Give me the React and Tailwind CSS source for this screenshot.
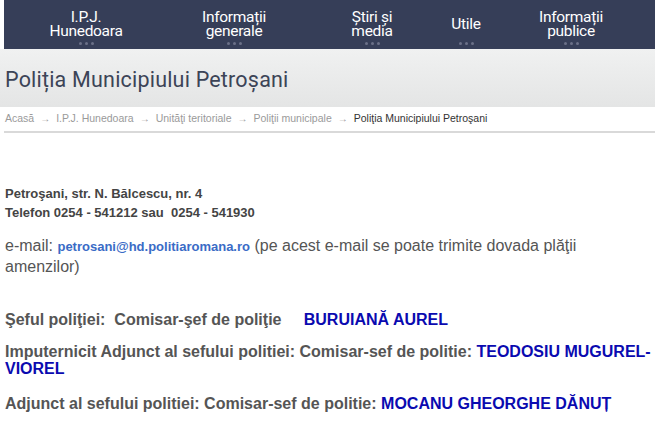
import React from 'react';

const NAV = [
    { lines: ['I.P.J.', 'Hunedoara'], w: 'w-[164px]' },
    { lines: ['Informații', 'generale'], w: 'w-[132px]' },
    { lines: ['Știri și', 'media'], w: 'w-[144px]' },
    { lines: ['Utile'], w: 'w-[44px]' },
    { lines: ['Informații', 'publice'], w: 'w-[166px]' },
];

const CRUMBS = ['Acasă', 'I.P.J. Hunedoara', 'Unităţi teritoriale', 'Poliţii municipale'];

const App = () => {
    return (
        <div className="w-[655px] h-[447px] overflow-hidden bg-white font-['Liberation_Sans',Arial,sans-serif]">
            {/* NAV */}
            <div className="ml-[4px] h-[49px] bg-[#363e58] flex items-start text-white">
                {NAV.map((item, i) => (
                    <div key={i} className={`${item.w} shrink-0 h-[49px] flex flex-col items-center justify-end pb-[4px]`}>
                        <div className="flex flex-col items-center justify-center flex-1 pt-[5px] text-[15.5px] leading-[14px] tracking-[-0.3px] font-['Roboto',sans-serif]">
                            {item.lines.map((l) => <span key={l}>{l}</span>)}
                        </div>
                        <div className="flex gap-[3px]">
                            <span className="w-[3px] h-[3px] rounded-full bg-[#6b7188]" />
                            <span className="w-[3px] h-[3px] rounded-full bg-[#6b7188]" />
                            <span className="w-[3px] h-[3px] rounded-full bg-[#6b7188]" />
                        </div>
                    </div>
                ))}
            </div>

            {/* TITLE BAND */}
            <div className="h-[58px] bg-gradient-to-b from-[#f0f1f1] to-[#e4e5e5] flex items-center pl-[5px] pt-[4px]">
                <h1 className="text-[21.5px] text-[#3c4457] tracking-[0.2px] font-['Roboto',sans-serif]">Poliția Municipiului Petroșani</h1>
            </div>

            {/* BREADCRUMB */}
            <div className="ml-[4px] h-[26px] flex items-center pl-[1px] text-[10.5px] text-[#9a9a9a] border-b-2 border-[#d9d9d9]">
                {CRUMBS.map((c) => (
                    <React.Fragment key={c}>
                        <span>{c}</span>
                        <span className="mx-[6px] text-[10px] -translate-y-[1px]">→</span>
                    </React.Fragment>
                ))}
                <span className="text-[#333]">Poliţia Municipiului Petroşani</span>
            </div>

            {/* CONTENT */}
            <div className="pl-[5px] pt-[51px] text-[#444]">
                <p className="text-[13px] font-bold leading-[19px]">
                    Petroşani, str. N. Bălcescu, nr. 4<br />
                    Telefon 0254 - 541212 sau &nbsp;0254 - 541930
                </p>
                <p className="mt-[14px] pr-[8px] text-[16px] leading-[20px] text-[#555]">
                    e-mail: <span className="text-[13px] font-bold text-[#3a6bc6]">petrosani@hd.politiaromana.ro</span> (pe acest e-mail se poate trimite dovada plăţii amenzilor)
                </p>
                <p className="mt-[33px] text-[16px] font-bold leading-[19px] text-[#555]">
                    Şeful poliţiei: &nbsp;Comisar-şef de poliţie &nbsp;&nbsp;&nbsp; <span className="text-[#0a0ab0]">BURUIANĂ AUREL</span>
                </p>
                <p className="mt-[14px] text-[16px] font-bold leading-[17px] text-[#555]">
                    Imputernicit Adjunct al sefului politiei: Comisar-sef de politie: <span className="text-[#0a0ab0] whitespace-nowrap">TEODOSIU MUGUREL-</span><br /><span className="text-[#0a0ab0]">VIOREL</span>
                </p>
                <p className="mt-[17px] text-[16px] font-bold leading-[19px] text-[#555]">
                    Adjunct al sefului politiei: Comisar-sef de politie: <span className="text-[#0a0ab0]">MOCANU GHEORGHE DĂNUȚ</span>
                </p>
            </div>
        </div>
    );
};

export default App;
